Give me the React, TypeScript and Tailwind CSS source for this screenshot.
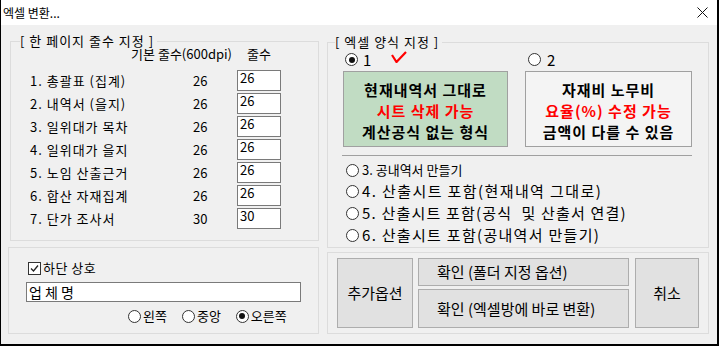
import React from "react";

const rows = [
  ["1. 총괄표 (집계)", "26"],
  ["2. 내역서 (을지)", "26"],
  ["3. 일위대가 목차", "26"],
  ["4. 일위대가 을지", "26"],
  ["5. 노임 산출근거", "26"],
  ["6. 합산 자재집계", "26"],
  ["7. 단가 조사서", "30"],
];

function Radio({ checked }: { checked?: boolean }) {
  return (
    <span className="flex h-[13px] w-[13px] shrink-0 items-center justify-center rounded-full border border-[#333] bg-white">
      {checked && <span className="h-[6px] w-[6px] rounded-full bg-[#111]" />}
    </span>
  );
}

function Checkbox() {
  return (
    <span className="flex h-[13px] w-[13px] shrink-0 items-center justify-center border border-[#333] bg-white">
      <svg width="9" height="9" viewBox="0 0 9 9">
        <path d="M1 4.5 L3.5 7 L8 1.5" fill="none" stroke="#222" strokeWidth="1.3" />
      </svg>
    </span>
  );
}

export default function App() {
  return (
    <div className="flex h-[346px] w-[719px] flex-col border-r-2 border-b-2 border-l border-black bg-[#f0f0f0] font-['Noto_Sans_CJK_KR','Noto_Sans',sans-serif] text-black">
      {/* title bar */}
      <div className="flex h-[25px] shrink-0 items-center justify-between bg-white pl-[2px] pr-[9px]">
        <span className="text-[12px] leading-[16px]">엑셀 변환...</span>
        <svg width="11" height="11" viewBox="0 0 11 11">
          <path d="M0.5 0.5 L10.5 10.5 M10.5 0.5 L0.5 10.5" stroke="#111" strokeWidth="1" />
        </svg>
      </div>

      <div className="flex flex-1 pl-[7px] pt-[16px]">
        {/* left column */}
        <div className="flex w-[311px] flex-col">
          <div className="relative ml-[2px] h-[200px] w-[309px] border border-[#dcdcdc] pt-[4px] pl-[19px]">
            <span className="absolute -top-[9px] left-[9px] bg-[#f0f0f0] pr-[3px] text-[13px] leading-[16px] tracking-[1px]">
              [ 한 페이지 줄수 지정 ]
            </span>
            <div className="flex h-[16px] items-center text-[13px] leading-[16px]">
              <span className="w-[207px] pr-[5px] text-right">기본 줄수(600dpi)</span>
              <span className="w-[44px] text-center">줄수</span>
            </div>
            <div className="mt-[7px] flex flex-col">
              {rows.map(([label, value]) => (
                <div key={label} className="flex h-[23px] items-center text-[13px] leading-[16px]">
                  <span className="w-[163px] tracking-[1px]">{label}</span>
                  <span className="w-[44px]">{value}</span>
                  <div className="h-[21px] w-[44px] border border-[#7a7a7a] bg-white pl-[2px] text-[13px] leading-[14px]">
                    {value}
                  </div>
                </div>
              ))}
            </div>
          </div>

          <div className="mt-[6px] flex h-[87px] w-[311px] flex-col border border-[#dcdcdc] pt-[12px] pl-[17px]">
            <div className="ml-[2px] flex h-[16px] items-center gap-[2px] text-[13px] leading-[16px]">
              <Checkbox />
              <span className="tracking-[0.5px]">하단 상호</span>
            </div>
            <div className="mt-[6px] flex h-[20px] w-[275px] items-center border border-[#7a7a7a] bg-white pl-[2px] text-[14px] leading-[16px]">
              업 체 명
            </div>
            <div className="mt-[6px] ml-[102px] flex h-[16px] items-center gap-[15px] text-[13px] leading-[16px]">
              <span className="flex items-center gap-[2px]">
                <Radio />
                왼쪽
              </span>
              <span className="flex items-center gap-[2px]">
                <Radio />
                중앙
              </span>
              <span className="flex items-center gap-[2px]">
                <Radio checked />
                오른쪽
              </span>
            </div>
          </div>
        </div>

        {/* right column */}
        <div className="mt-[1px] ml-[8px] flex w-[382px] flex-col">
          <div className="relative flex h-[206px] flex-col border border-[#dcdcdc] pt-[9px]">
            <span className="absolute -top-[9px] left-[7px] bg-[#f0f0f0] pr-[3px] text-[13px] leading-[16px] tracking-[1px]">
              [ 엑셀 양식 지정 ]
            </span>
            <div className="flex pl-[15px]">
              <div className="flex w-[165px] flex-col">
                <div className="ml-[2px] flex h-[15px] items-center gap-[5px]">
                  <Radio checked />
                  <span className="text-[15px] leading-[15px]">1</span>
                  <svg className="ml-[15px] -mt-[6px]" width="16" height="12" viewBox="0 0 16 12">
                    <path d="M1 4 L5.5 11 L15 1" fill="none" stroke="#ff0000" strokeWidth="2.2" />
                  </svg>
                </div>
                <div className="mt-[4px] flex h-[76px] flex-col items-center justify-center border border-[#a0a0a0] bg-[#c1dcc3] pt-[2px] text-[15px] leading-[21px] font-bold tracking-[1px]">
                  <span>현재내역서 그대로</span>
                  <span className="text-[#ff0000]">시트 삭제 가능</span>
                  <span>계산공식 없는 형식</span>
                </div>
              </div>
              <div className="ml-[17px] flex w-[167px] flex-col">
                <div className="ml-[3px] flex h-[15px] items-center gap-[6px]">
                  <Radio />
                  <span className="text-[15px] leading-[15px]">2</span>
                </div>
                <div className="mt-[4px] flex h-[76px] flex-col items-center justify-center border border-[#a0a0a0] bg-[#f4f4f4] pt-[2px] text-[15px] leading-[21px] font-bold tracking-[1px]">
                  <span>자재비 노무비</span>
                  <span className="text-[#ff0000]">요율(%) 수정 가능</span>
                  <span>금액이 다를 수 있음</span>
                </div>
              </div>
            </div>
            <div className="mt-[8px] ml-[14px] h-px w-[350px] bg-[#a0a0a0]" />
            <div className="mt-[4px] flex flex-col pl-[18px]">
              <div className="flex h-[20px] items-center gap-[3px] text-[13px] leading-[16px]">
                <Radio />
                <span>3. 공내역서 만들기</span>
              </div>
              <div className="flex h-[22px] items-center gap-[3px] text-[15px] leading-[18px] tracking-[1.4px]">
                <Radio />
                <span>4. 산출시트 포함(현재내역 그대로)</span>
              </div>
              <div className="flex h-[22px] items-center gap-[3px] text-[15px] leading-[18px] tracking-[1.2px]">
                <Radio />
                <span>5. 산출시트 포함(공식&nbsp; 및 산출서 연결)</span>
              </div>
              <div className="flex h-[22px] items-center gap-[3px] text-[15px] leading-[18px] tracking-[1.3px]">
                <Radio />
                <span>6. 산출시트 포함(공내역서 만들기)</span>
              </div>
            </div>
          </div>

          <div className="mt-[4px] flex h-[82px] border border-[#dcdcdc] pt-[5px] pl-[9px] text-[15px] leading-[18px]">
            <button className="flex h-[70px] w-[76px] items-center justify-center border border-[#adadad] bg-[#e1e1e1]">
              추가옵션
            </button>
            <div className="ml-[5px] flex w-[211px] flex-col gap-[3px]">
              <button className="flex h-[28px] items-center border border-[#adadad] bg-[#e1e1e1] pl-[18px]">
                확인 (폴더 지정 옵션)
              </button>
              <button className="flex h-[39px] items-center border border-[#adadad] bg-[#e1e1e1] pl-[18px]">
                확인 (엑셀방에 바로 변환)
              </button>
            </div>
            <button className="ml-[6px] flex h-[70px] w-[64px] items-center justify-center border border-[#adadad] bg-[#e1e1e1]">
              취소
            </button>
          </div>
        </div>
      </div>
    </div>
  );
}
